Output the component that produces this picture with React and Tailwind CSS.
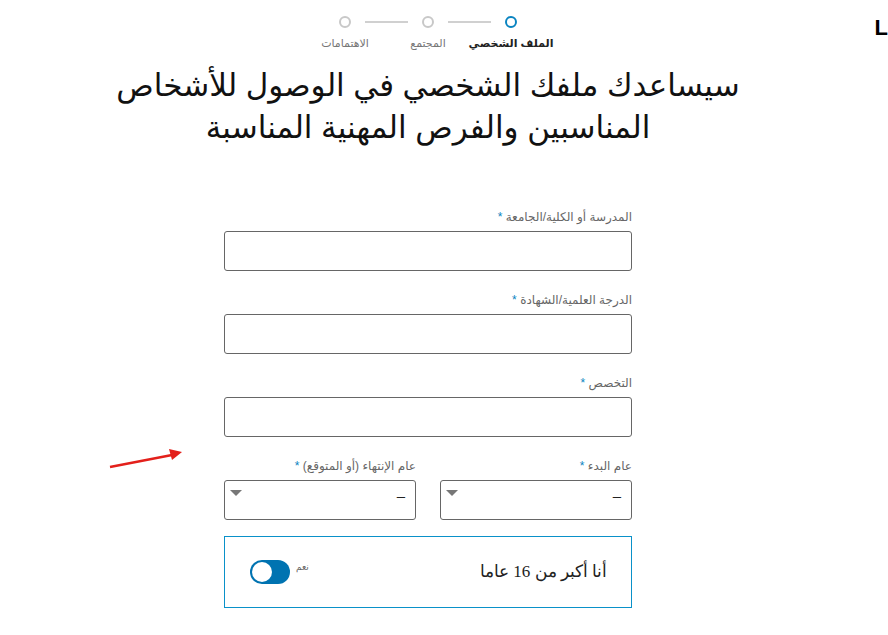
import React from 'react'

const steps = [
    { label: 'الملف الشخصي', active: true },
    { label: 'المجتمع', active: false },
    { label: 'الاهتمامات', active: false },
]

function Stepper() {
    return (
        <div className="flex justify-center">
            {steps.map((s, i) => (
                <div key={i} className="w-[83px] flex flex-col items-center">
                    <div className="flex items-center w-full">
                        <span className={'flex-1 h-[2px] ml-[14px] ' + (i === 0 ? 'bg-transparent' : 'bg-[#d0d0d0]')} />
                        <span className={'w-3 h-3 rounded-full border-2 ' + (s.active ? 'border-[#0a84c1]' : 'border-[#c8c8c8]')} />
                        <span className={'flex-1 h-[2px] mr-[14px] ' + (i === steps.length - 1 ? 'bg-transparent' : 'bg-[#d0d0d0]')} />
                    </div>
                    <div className={'mt-[7px] text-[11px] leading-4 whitespace-nowrap ' + (s.active ? 'font-bold text-[#222]' : 'text-[#777]')}>
                        {s.label}
                    </div>
                </div>
            ))}
        </div>
    )
}

function Label({ text }) {
    return (
        <label className="block text-[12px] leading-4 text-[#666] mb-[6px]">
            {text} <span className="text-[#0a84c1]">*</span>
        </label>
    )
}

function Field({ label }) {
    return (
        <div className="mb-[21px]">
            <Label text={label} />
            <input type="text" className="w-full h-10 border border-[#666] rounded-[3px] bg-white" />
        </div>
    )
}

function Select({ label }) {
    return (
        <div className="flex-1">
            <Label text={label} />
            <div className="h-10 border border-[#666] rounded-[3px] flex items-center justify-between px-[10px] pl-[5px]">
                <span className="text-[15px] text-[#222] -mt-2">–</span>
                <svg width="12" height="8" viewBox="0 0 12 8" className="-mt-3">
                    <path d="M0 0 L12 0 L6 6 Z" fill="#777" />
                </svg>
            </div>
        </div>
    )
}

export default function App() {
    return (
        <div dir="rtl" className="relative w-[888px] h-[635px] bg-white overflow-hidden" style={{ fontFamily: 'Arial, "Liberation Sans", "DejaVu Sans", sans-serif' }}>
            <div className="absolute top-[18px] right-0 text-[22px] font-bold leading-5 text-black">L</div>
            <svg className="absolute left-[106px] top-[446px]" width="80" height="26" viewBox="0 0 80 26">
                <line x1="4" y1="21" x2="66" y2="9" stroke="#e3201b" strokeWidth="2.5" />
                <path d="M76 6 L63 3 L66 14 Z" fill="#e3201b" />
            </svg>
            <div className="w-[856px] mr-auto pt-4">
                <Stepper />
                <h1 className="mt-[14px] text-center text-[31px] leading-[42px] text-[#111] whitespace-nowrap">
                    سيساعدك ملفك الشخصي في الوصول للأشخاص
                    <br />
                    المناسبين والفرص المهنية المناسبة
                </h1>
                <div className="w-[408px] mx-auto mt-[60px]">
                    <Field label="المدرسة أو الكلية/الجامعة" />
                    <Field label="الدرجة العلمية/الشهادة" />
                    <Field label="التخصص" />
                    <div className="flex gap-6 mt-[9px]">
                        <Select label="عام البدء" />
                        <Select label="عام الإنتهاء (أو المتوقع)" />
                    </div>
                    <div className="mt-4 h-[72px] border border-[#0a91c9] flex items-center justify-between pr-6 pl-[25px]">
                        <span className="text-[17px] text-[#222]" style={{ fontFamily: '"Times New Roman", "Liberation Serif", "DejaVu Serif", serif' }}>
                            أنا أكبر من 16 عاما
                        </span>
                        <div className="flex items-center gap-[6px]">
                            <span className="text-[9px] text-[#666] -mt-[8px]">نعم</span>
                            <span className="w-10 h-6 rounded-full bg-[#0073b1] flex items-center justify-end px-[2px]">
                                <span className="w-5 h-5 rounded-full bg-white" />
                            </span>
                        </div>
                    </div>
                </div>
            </div>
        </div>
    )
}
